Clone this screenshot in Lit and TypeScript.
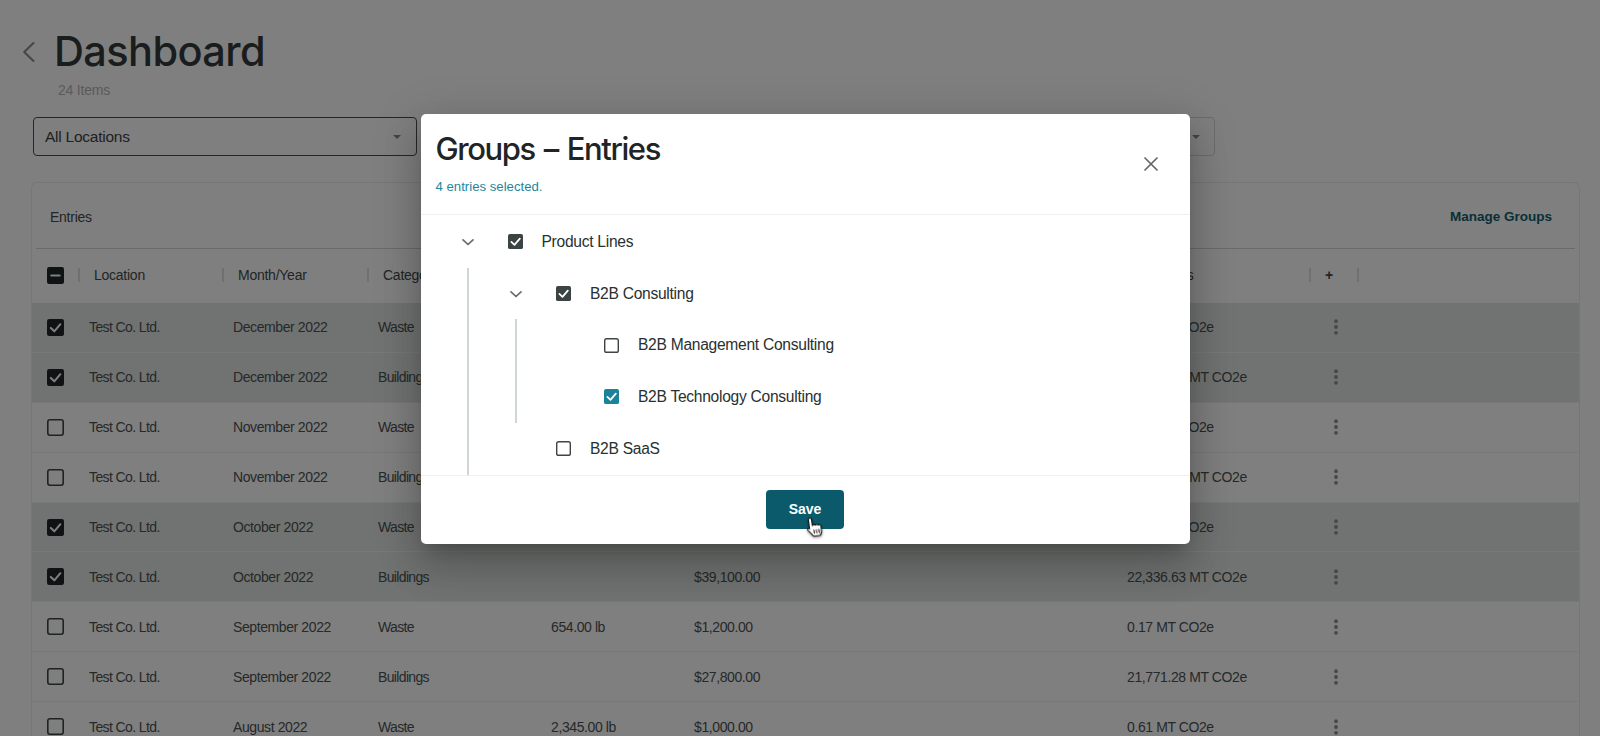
import { LitElement, html, css, svg } from "lit";
import { customElement } from "lit/decorators.js";

type Row = { month: string; cat: string; qty: string; cost: string; em: string; checked: boolean };
const ROWS: Row[] = [
  { month: "December 2022", cat: "Waste", qty: "", cost: "", em: "0.08 MT CO2e", checked: true },
  { month: "December 2022", cat: "Buildings", qty: "", cost: "", em: "25,012.44 MT CO2e", checked: true },
  { month: "November 2022", cat: "Waste", qty: "", cost: "", em: "0.21 MT CO2e", checked: false },
  { month: "November 2022", cat: "Buildings", qty: "", cost: "", em: "23,108.52 MT CO2e", checked: false },
  { month: "October 2022", cat: "Waste", qty: "", cost: "", em: "0.34 MT CO2e", checked: true },
  { month: "October 2022", cat: "Buildings", qty: "", cost: "$39,100.00", em: "22,336.63 MT CO2e", checked: true },
  { month: "September 2022", cat: "Waste", qty: "654.00 lb", cost: "$1,200.00", em: "0.17 MT CO2e", checked: false },
  { month: "September 2022", cat: "Buildings", qty: "", cost: "$27,800.00", em: "21,771.28 MT CO2e", checked: false },
  { month: "August 2022", cat: "Waste", qty: "2,345.00 lb", cost: "$1,000.00", em: "0.61 MT CO2e", checked: false },
];

const tick = svg`<path d="M3.6 8.4 6.9 11.6 12.6 4.9" fill="none" stroke="#fff" stroke-width="1.9" stroke-linecap="round" stroke-linejoin="round"/>`;

@customElement("app-root")
export class AppRoot extends LitElement {
  static styles = css`
    :host {
      display: block;
      position: relative;
      width: 1600px;
      height: 736px;
      overflow: hidden;
      background: #fff;
      font-family: "Liberation Sans", Arial, sans-serif;
      color: #343a3a;
    }
    .head { display: flex; align-items: center; height: 104px; padding-left: 22px; }
    .back { width: 32px; height: 24px; flex: none; }
    .titles { padding-top: 19px; font-family: Inter, "Liberation Sans", sans-serif; }
    h1 { margin: 0; font-size: 41.5px; line-height: 50px; font-weight: 500; letter-spacing: -0.6px; color: #343a3a; }
    .count { margin: 6px 0 0 4px; font-family: "Liberation Sans", sans-serif; font-size: 14px; line-height: 16px; letter-spacing: -0.2px; color: #b5b5b5; }
    .filters { display: flex; gap: 8px; margin: 13px 0 0 33px; height: 39px; }
    .select {
      box-sizing: border-box;
      display: flex;
      align-items: center;
      justify-content: space-between;
      border: 1px solid #d9d9d9;
      border-radius: 4px;
      padding: 0 15px 0 11px;
      font-size: 15.5px;
      letter-spacing: -0.25px;
      color: #3c4242;
    }
    .select.loc { width: 384px; border-color: #4a4f4f; }
    .select.other { width: 790px; padding-right: 14.5px; justify-content: flex-end; }
    .caret { width: 0; height: 0; border-left: 4.5px solid transparent; border-right: 4.5px solid transparent; border-top: 4.5px solid #888; }
    .card {
      margin: 26px 0 0 31px;
      border: 1px solid #ececec;
      border-bottom: 0;
      border-radius: 6px 6px 0 0;
      width: 1549px;
      box-sizing: border-box;
      height: 560px;
    }
    .bar {
      display: flex;
      align-items: center;
      justify-content: space-between;
      box-sizing: border-box;
      height: 66px;
      margin: 0 4px;
      padding: 2px 23px 0 14px;
      border-bottom: 1px solid #d2d4d4;
      font-size: 14px;
      letter-spacing: -0.25px;
      color: #444a4a;
    }
    .manage { font-weight: 700; font-size: 13.5px; letter-spacing: 0; color: #135e6e; }
    .cols {
      display: grid;
      grid-template-columns: 46px 144px 145px 173px 143px 433px 193px 48px 0;
      box-sizing: border-box;
      height: 54px;
      padding-bottom: 2px;
      align-items: center;
      font-size: 14px;
      letter-spacing: -0.25px;
      color: #444a4a;
    }
    .cols .cb-cell { padding-left: 15px; }
    .hcell { display: flex; align-items: center; height: 14px; border-left: 2px solid #e0e0e0; padding-left: 14px; white-space: nowrap; }
    .hcell.plus { font-weight: 700; }
    .hcell.end { width: 0; padding: 0; }
    .row {
      display: grid;
      grid-template-columns: 57px 144px 145px 173px 143px 433px 199px 20px;
      align-items: center;
      height: 49.9px;
      box-sizing: border-box;
      border-bottom: 1px solid #eef0f0;
      font-size: 14px;
      letter-spacing: -0.4px;
      color: #4c5252;
      white-space: nowrap;
    }
    .row.sel { background: #e0e6e3; }
    .row .cb-cell { padding-left: 15px; }
    .co { letter-spacing: -0.6px; }
    .cat { letter-spacing: -0.65px; }
    .cb-cell { display: flex; align-items: center; }
    .cb { display: block; width: 17px; height: 17px; }
    .kebab { display: block; width: 20px; height: 16px; }
    .scrim { position: absolute; inset: 0; background: rgba(0, 0, 0, 0.5); }
    .modal {
      position: absolute;
      left: 420.5px;
      top: 114px;
      width: 769px;
      height: 430px;
      background: #fff;
      border-radius: 5px;
      box-shadow: 0 11px 15px -7px rgba(0, 0, 0, 0.2), 0 24px 38px 3px rgba(0, 0, 0, 0.14), 0 9px 46px 8px rgba(0, 0, 0, 0.12);
      display: flex;
      flex-direction: column;
      overflow: hidden;
    }
    .mhead { position: relative; height: 100px; flex: none; padding: 0 15px; border-bottom: 1px solid #f0f0f0; }
    .mhead h2 { margin: 16px 0 0; font-family: Inter, "Liberation Sans", sans-serif; font-size: 31px; line-height: 38px; font-weight: 500; letter-spacing: -1.4px; word-spacing: 2px; color: #1f2525; }
    .mhead p { margin: 10px 0 0; font-size: 13.2px; line-height: 18px; color: #1c87a0; }
    .close { position: absolute; right: 31.5px; top: 43px; width: 14px; height: 14px; display: block; }
    .tree { flex: 1; min-height: 0; overflow: hidden; padding-top: 1px; }
    .node { display: flex; align-items: center; height: 51.7px; font-size: 15.6px; letter-spacing: -0.28px; color: #2a3030; white-space: nowrap; }
    .indent { width: 39px; flex: none; }
    .chev { width: 16px; height: 16px; flex: none; display: block; margin-right: 32px; }
    .chev-gap { width: 48px; flex: none; }
    .node .cb { width: 15px; height: 15px; flex: none; margin-right: 19px; }
    .children { border-left: 2px solid #d0d5d5; margin-left: 46.5px; padding-bottom: 3px; }
    .children .children { margin-left: 46px; padding-bottom: 0; }
    .mfoot { flex: none; height: 69px; display: flex; align-items: center; justify-content: center; border-top: 1px solid #f0f0f0; box-sizing: border-box; padding-bottom: 2px; }
    .save { position: relative; width: 78px; height: 39px; border: 0; border-radius: 4px; background: #0b5a6b; color: #fff; font: 700 14px "Liberation Sans", sans-serif; letter-spacing: -0.1px; padding: 0; }
    .hand { position: absolute; left: 40px; top: 26px; width: 18px; height: 22px; transform: rotate(-8deg); filter: drop-shadow(0 1px 1.5px rgba(0, 0, 0, 0.45)); }
  `;

  cb(on: boolean, fill = "#1f2626") {
    return html`<svg class="cb" viewBox="0 0 16 16">
      ${on
        ? svg`<rect x="0" y="0" width="16" height="16" rx="2" fill=${fill}/>${tick}`
        : svg`<rect x=".75" y=".75" width="14.5" height="14.5" rx="2" fill="none" stroke="#3f4545" stroke-width="1.5"/>`}
    </svg>`;
  }

  chev() {
    return html`<svg class="chev" viewBox="0 0 16 16"><path d="M3 5.800 8 10.500l5-4.700" fill="none" stroke="#6a6a6a" stroke-width="1.7" stroke-linecap="round" stroke-linejoin="round"/></svg>`;
  }

  node(label: string, expandable: boolean, on: boolean, fill = "#3b4343") {
    return html`<div class="node">
      <span class="indent"></span>
      ${expandable ? this.chev() : html`<span class="chev-gap"></span>`}
      ${this.cb(on, fill)}${label}
    </div>`;
  }

  renderRow(r: Row) {
    return html`<div class="row ${r.checked ? "sel" : ""}">
      <div class="cb-cell">${this.cb(r.checked)}</div>
      <div class="co">Test Co. Ltd.</div>
      <div>${r.month}</div>
      <div class="cat">${r.cat}</div>
      <div>${r.qty}</div>
      <div>${r.cost}</div>
      <div>${r.em}</div>
      <svg class="kebab" viewBox="0 0 20 16"><circle cx="10" cy="2.200" r="1.9" fill="#8f8f8f"/><circle cx="10" cy="8" r="1.9" fill="#8f8f8f"/><circle cx="10" cy="13.800" r="1.9" fill="#8f8f8f"/></svg>
    </div>`;
  }

  render() {
    return html`
      <div class="page">
        <div class="head">
          <svg class="back" viewBox="0 0 32 24"><path d="M11.500 3 2.200 12l9.300 9" fill="none" stroke="#8a8a8a" stroke-width="2" stroke-linecap="round" stroke-linejoin="round"/></svg>
          <div class="titles">
            <h1>Dashboard</h1>
            <p class="count">24 Items</p>
          </div>
        </div>
        <div class="filters">
          <div class="select loc">All Locations<span class="caret"></span></div>
          <div class="select other"><span class="caret"></span></div>
        </div>
        <div class="card">
          <div class="bar"><span>Entries</span><span class="manage">Manage Groups</span></div>
          <div class="cols">
            <div class="cb-cell">
              <svg class="cb" viewBox="0 0 16 16"><rect width="16" height="16" rx="2" fill="#1f2626"/><path d="M4 8h8" stroke="#fff" stroke-width="1.900" stroke-linecap="round"/></svg>
            </div>
            <div class="hcell">Location</div>
            <div class="hcell">Month/Year</div>
            <div class="hcell">Category</div>
            <div class="hcell">Quantity</div>
            <div class="hcell">Cost</div>
            <div class="hcell">Emissions</div>
            <div class="hcell plus">+</div>
            <div class="hcell end"></div>
          </div>
          ${ROWS.map((r) => this.renderRow(r))}
        </div>
      </div>
      <div class="scrim"></div>
      <div class="modal">
        <div class="mhead">
          <h2>Groups – Entries</h2>
          <p>4 entries selected.</p>
          <svg class="close" viewBox="0 0 14 14"><path d="M1 1l12 12M13 1 1 13" stroke="#666" stroke-width="1.7" stroke-linecap="round"/></svg>
        </div>
        <div class="tree">
          ${this.node("Product Lines", true, true)}
          <div class="children">
            ${this.node("B2B Consulting", true, true)}
            <div class="children">
              ${this.node("B2B Management Consulting", false, false)}
              ${this.node("B2B Technology Consulting", false, true, "#1a8299")}
            </div>
            ${this.node("B2B SaaS", false, false)}
          </div>
        </div>
        <div class="mfoot">
          <button class="save">Save
            <svg class="hand" viewBox="0 0 18 22"><path d="M5 1.500c1 0 1.600.7 1.600 1.700v6c.4-.8 2.600-.9 3 0 .5-.6 2.300-.6 2.800.3.700-.4 2.400-.2 2.600 1.200V15c0 2-.7 3.500-1.700 5H6.500C5.500 18.500 3.800 16.500 1.700 13.500c-.8-1.200.3-2.600 1.600-1.600l.1.100V3.200C3.400 2.200 4 1.500 5 1.500z" fill="#fff" stroke="#111" stroke-width="1.100" stroke-linejoin="round"/><path d="M7.500 13.500v4M10 13.500v4M12.500 13.500v4" stroke="#111" stroke-width="1"/></svg>
          </button>
        </div>
      </div>
    `;
  }
}
